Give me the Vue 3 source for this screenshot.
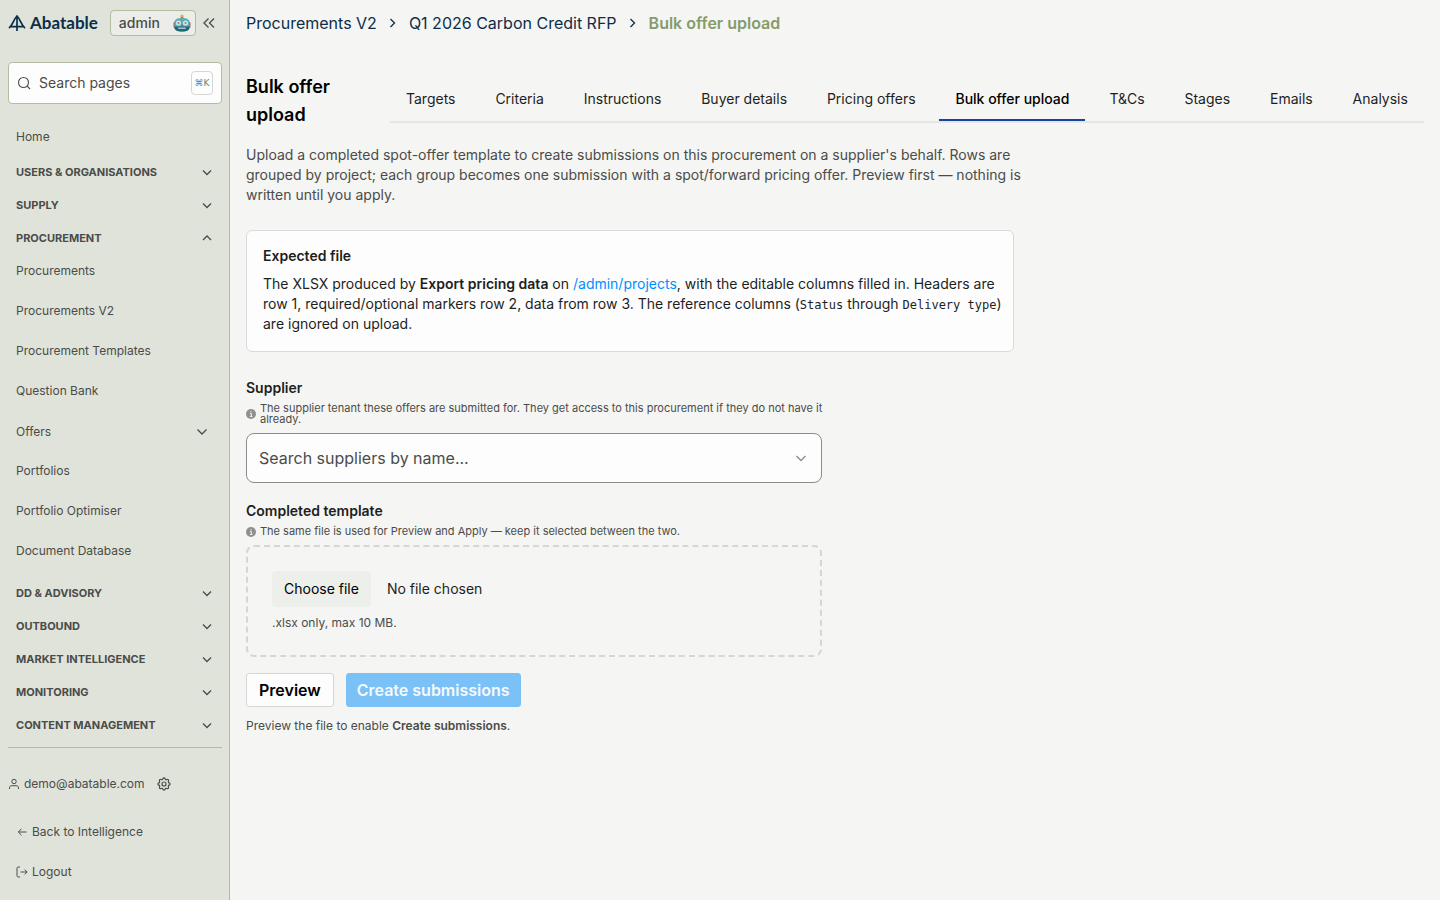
<script setup>
import { ref } from 'vue'

const search = ref('')
const supplier = ref('')
const fileName = ref('No file chosen')
const previewed = ref(false)

const chevronDown = 'M4 6.5l4 4 4-4'
const chevronUp = 'M4 10l4-4 4 4'

const groups = ref([
  { title: 'Users & organisations', open: false, items: [] },
  { title: 'Supply', open: false, items: [] },
  {
    title: 'Procurement',
    open: true,
    items: [
      { label: 'Procurements' },
      { label: 'Procurements V2' },
      { label: 'Procurement Templates' },
      { label: 'Question Bank' },
      { label: 'Offers', nested: true },
      { label: 'Portfolios' },
      { label: 'Portfolio Optimiser' },
      { label: 'Document Database' }
    ]
  },
  { title: 'DD & Advisory', open: false, items: [] },
  { title: 'Outbound', open: false, items: [] },
  { title: 'Market intelligence', open: false, items: [] },
  { title: 'Monitoring', open: false, items: [] },
  { title: 'Content management', open: false, items: [] }
])

const tabs = [
  'Targets',
  'Criteria',
  'Instructions',
  'Buyer details',
  'Pricing offers',
  'Bulk offer upload',
  'T&Cs',
  'Stages',
  'Emails',
  'Analysis'
]
const activeTab = ref('Bulk offer upload')

const onFileChange = function (event) {
  const file = event.target.files[0]
  fileName.value = file ? file.name : 'No file chosen'
}
</script>

<template>
  <div class="layout">
    <aside class="sidebar">
      <div class="brand-row">
        <a href="#" class="brand">
          <svg class="brand__mark" viewBox="0 0 18 18" aria-hidden="true">
            <path d="M9 1.500v15.500M1 14.200C5 11 5.500 5.500 9 2c3.500 3.500 4 9 8 12.200M2.500 12.600h13" />
          </svg>
          <span class="brand__name">Abatable</span>
        </a>
        <span class="role">
          admin
          <svg class="role__robot" viewBox="0 0 18 18" aria-hidden="true">
            <path d="M9 2.500v3" stroke="#6a5a9c" stroke-width="2.500" />
            <circle cx="9" cy="2" r="1.600" fill="#f2a63b" />
            <rect x="0.500" y="8" width="2" height="6" rx="1" fill="#b0605c" />
            <rect x="15.500" y="8" width="2" height="6" rx="1" fill="#b0605c" />
            <path d="M1.500 8C1.500 5.500 4.500 4 9 4s7.500 1.500 7.500 4v5.500c0 2.500-2.500 4-7.500 4s-7.500-1.500-7.500-4z" fill="#5fa9b5" />
            <path d="M1.500 12.500v1c0 2.500 2.500 4 7.500 4s7.500-1.500 7.500-4v-1z" fill="#226678" />
            <circle cx="5.500" cy="9" r="2.600" fill="#b5ecf2" />
            <circle cx="12.500" cy="9" r="2.600" fill="#b5ecf2" />
            <circle cx="5.500" cy="9" r="1" fill="#cf6a6a" />
            <circle cx="12.500" cy="9" r="1" fill="#cf6a6a" />
            <path d="M9 9.500l1.300 2.500H7.700z" fill="#d9534f" />
            <rect x="5" y="13.500" width="8" height="1.500" rx="0.700" fill="#9fc4cb" />
          </svg>
        </span>
        <button type="button" class="icon-button" aria-label="Collapse sidebar">
          <svg class="icon-16" viewBox="0 0 16 16" aria-hidden="true">
            <path d="M7.500 3.500L3 8l4.500 4.500M13 3.500L8.500 8l4.500 4.500" />
          </svg>
        </button>
      </div>

      <label class="search">
        <svg class="icon-16" viewBox="0 0 16 16" aria-hidden="true">
          <circle cx="7.500" cy="7.500" r="5" />
          <path d="M11.200 11.200l2.800 2.800" />
        </svg>
        <input v-model="search" type="text" placeholder="Search pages" aria-label="Search pages" />
        <kbd>⌘K</kbd>
      </label>

      <nav class="nav" aria-label="Admin">
        <a href="#" class="nav__home">Home</a>
        <section v-for="group in groups" :key="group.title">
          <button type="button" class="nav__group" :aria-expanded="group.open" @click="group.open = !group.open">
            {{ group.title }}
            <svg class="icon-16" viewBox="0 0 16 16" aria-hidden="true">
              <path :d="group.open ? chevronUp : chevronDown" />
            </svg>
          </button>
          <ul v-if="group.open && group.items.length" class="nav__items">
            <li v-for="item in group.items" :key="item.label">
              <button v-if="item.nested" type="button" class="nav__item nav__item--nested">
                {{ item.label }}
                <svg class="icon-16" viewBox="0 0 16 16" aria-hidden="true">
                  <path d="M3.500 5.500L8 10l4.500-4.500" />
                </svg>
              </button>
              <a v-else href="#" class="nav__item">{{ item.label }}</a>
            </li>
          </ul>
        </section>
      </nav>

      <div class="account">
        <div class="account__user">
          <svg class="icon-12" viewBox="0 0 12 12" aria-hidden="true">
            <circle cx="6" cy="3.500" r="2.200" />
            <path d="M1.500 11V9.800C1.500 8.500 2.500 7.700 3.700 7.700h4.600c1.200 0 2.200.8 2.200 2.100V11" />
          </svg>
          <span>demo@abatable.com</span>
          <button type="button" class="icon-button" aria-label="Settings">
            <svg class="icon-16" viewBox="0 0 24 24" aria-hidden="true">
              <g stroke-width="1.800">
                <circle cx="12" cy="12" r="3" />
                <path d="M10.300 4.300c.4-1.800 3-1.800 3.400 0a1.700 1.700 0 0 0 2.600 1.100c1.500-.9 3.300.8 2.400 2.400a1.700 1.700 0 0 0 1 2.500c1.800.4 1.800 3 0 3.400a1.700 1.700 0 0 0-1 2.600c.9 1.500-.9 3.300-2.400 2.400a1.700 1.700 0 0 0-2.600 1c-.4 1.800-3 1.800-3.400 0a1.700 1.700 0 0 0-2.600-1c-1.500.9-3.300-.9-2.400-2.400a1.700 1.700 0 0 0-1-2.600c-1.800-.4-1.800-3 0-3.400a1.700 1.700 0 0 0 1-2.500c-.9-1.600.9-3.300 2.400-2.400 1 .6 2.300 0 2.600-1.100z" />
              </g>
            </svg>
          </button>
        </div>
        <a href="#" class="account__link">
          <svg class="icon-12" viewBox="0 0 12 12" aria-hidden="true">
            <path d="M10.500 6h-8M5.500 2.800L2.300 6l3.200 3.200" />
          </svg>
          Back to Intelligence
        </a>
        <a href="#" class="account__link">
          <svg class="icon-12" viewBox="0 0 12 12" aria-hidden="true">
            <path d="M4 1H2.200C1.500 1 1 1.500 1 2.200v7.600c0 .7.500 1.200 1.200 1.200H4M4.500 6h6.500M8.800 3.600L11.200 6 8.800 8.400" />
          </svg>
          Logout
        </a>
      </div>
    </aside>

    <main class="main">
      <nav class="breadcrumbs" aria-label="Breadcrumb">
        <a href="#">Procurements V2</a>
        <svg class="icon-16" viewBox="0 0 16 16" aria-hidden="true">
          <path d="M5.500 4l4 4-4 4" />
        </svg>
        <a href="#">Q1 2026 Carbon Credit RFP</a>
        <svg class="icon-16" viewBox="0 0 16 16" aria-hidden="true">
          <path d="M5.500 4l4 4-4 4" />
        </svg>
        <span class="breadcrumbs__current" aria-current="page">Bulk offer upload</span>
      </nav>

      <header class="page-header">
        <h1>Bulk offer upload</h1>
        <div class="tabs" role="tablist">
          <button
            v-for="tab in tabs"
            :key="tab"
            type="button"
            role="tab"
            class="tab"
            :class="{ 'tab--active': tab === activeTab }"
            :aria-selected="tab === activeTab"
            @click="activeTab = tab"
          >
            {{ tab }}
          </button>
        </div>
      </header>

      <p class="intro">
        Upload a completed spot-offer template to create submissions on this procurement on a supplier's behalf. Rows are
        grouped by project; each group becomes one submission with a spot/forward pricing offer. Preview first — nothing is
        written until you apply.
      </p>

      <section class="card">
        <h2>Expected file</h2>
        <p>
          The XLSX produced by <strong>Export pricing data</strong> on <a href="#">/admin/projects</a>, with the editable
          columns filled in. Headers are row 1, required/optional markers row 2, data from row 3. The reference columns
          (<code>Status</code> through <code>Delivery type</code>) are ignored on upload.
        </p>
      </section>

      <form class="form" @submit.prevent>
        <div class="field">
          <label for="supplier" class="field__label">Supplier</label>
          <p class="field__hint">
            <svg class="info" viewBox="0 0 10 10" aria-hidden="true">
              <circle cx="5" cy="5" r="5" />
              <path d="M4 4.500h1.300v2.800M3.900 7.400h2.500M5 2.100v1.200" />
            </svg>
            <span>The supplier tenant these offers are submitted for. They get access to this procurement if they do not have it already.</span>
          </p>
          <div class="combobox">
            <input id="supplier" v-model="supplier" type="text" role="combobox" aria-expanded="false" placeholder="Search suppliers by name..." />
            <svg class="icon-16" viewBox="0 0 16 16" aria-hidden="true">
              <path d="M3.500 6L8 10.500 12.500 6" />
            </svg>
          </div>
        </div>

        <div class="field">
          <span class="field__label">Completed template</span>
          <p class="field__hint">
            <svg class="info" viewBox="0 0 10 10" aria-hidden="true">
              <circle cx="5" cy="5" r="5" />
              <path d="M4 4.500h1.300v2.800M3.900 7.400h2.500M5 2.100v1.200" />
            </svg>
            <span>The same file is used for Preview and Apply — keep it selected between the two.</span>
          </p>
          <div class="dropzone">
            <div class="dropzone__row">
              <input id="template" class="dropzone__input" type="file" accept=".xlsx" @change="onFileChange" />
              <label for="template" class="dropzone__button">Choose file</label>
              <span>{{ fileName }}</span>
            </div>
            <p class="dropzone__note">.xlsx only, max 10 MB.</p>
          </div>
        </div>

        <div class="actions">
          <button type="button" class="button" @click="previewed = true">Preview</button>
          <button type="submit" class="button button--primary" :disabled="!previewed">Create submissions</button>
        </div>
        <p class="form__note">Preview the file to enable <strong>Create submissions</strong>.</p>
      </form>
    </main>
  </div>
</template>

<style>
body {
  background: #f5f5f3;
}
</style>

<style scoped>
.layout {
  display: grid;
  grid-template-columns: 230px 1fr;
  min-height: 100vh;
  font-family: Inter, "Liberation Sans", sans-serif;
  font-size: 14px;
  line-height: 20px;
  color: #1d1f1e;
}

.layout *,
.layout {
  box-sizing: border-box;
}

h1,
h2,
p,
ul {
  margin: 0;
  padding: 0;
}

a {
  color: inherit;
  text-decoration: none;
}

button,
input {
  font: inherit;
  color: inherit;
}

button {
  padding: 0;
  border: 0;
  background: none;
  cursor: pointer;
}

strong {
  font-weight: 600;
}

svg {
  flex: none;
  fill: none;
  stroke: currentColor;
  stroke-width: 1.3;
}

.icon-16 {
  width: 16px;
  height: 16px;
}

.icon-12 {
  width: 12px;
  height: 12px;
  stroke-width: 1;
}

.icon-button {
  display: flex;
}

.sidebar {
  display: flex;
  flex-direction: column;
  padding: 8px 7px 8px 8px;
  background: #e0e3d9;
  border-right: 1px solid #b3bba0;
  color: #4a4c4a;
}

.brand-row {
  display: flex;
  align-items: center;
  height: 30px;
}

.brand {
  display: flex;
  align-items: center;
  gap: 4px;
  margin-right: 12px;
  color: #0b2e4a;
}

.brand__mark {
  width: 18px;
  height: 18px;
  stroke-width: 1.7;
}

.brand__name {
  font-family: Lato, sans-serif;
  font-size: 17px;
  font-weight: 700;
}

.role {
  display: flex;
  align-items: center;
  justify-content: space-between;
  width: 86px;
  height: 26px;
  margin-right: 5px;
  padding: 0 4px 0 8px;
  border: 1px solid #b3bba0;
  border-radius: 4px;
  background: #ecede8;
  font-weight: 500;
}

.role__robot {
  width: 18px;
  height: 18px;
  stroke: none;
}

.search {
  display: flex;
  align-items: center;
  gap: 7px;
  height: 42px;
  margin-top: 24px;
  padding: 0 8px 0 7px;
  border: 1px solid #b3bba0;
  border-radius: 4px;
  background: #fdfdfd;
}

.search input {
  flex: 1;
  min-width: 0;
  padding: 0;
  border: 0;
  outline: 0;
  background: none;
}

input::placeholder {
  color: #4a4c4a;
  opacity: 1;
}

.search .icon-16 {
  stroke-width: 1.1;
}

kbd {
  width: 22px;
  height: 24px;
  border: 1px solid #d6d6d6;
  border-radius: 4px;
  font-family: "DejaVu Sans", sans-serif;
  font-size: 9px;
  line-height: 22px;
  text-align: center;
  color: #777977;
}

.nav {
  padding: 15px 7px 6px 8px;
  border-bottom: 1px solid #b3bba0;
  font-size: 12px;
}

.nav__home {
  display: flex;
  align-items: center;
  height: 36px;
}

.nav__group {
  display: flex;
  align-items: center;
  justify-content: space-between;
  width: 100%;
  height: 33px;
  font-size: 11px;
  font-weight: 700;
  text-transform: uppercase;
}

.nav__items {
  display: flex;
  flex-direction: column;
  gap: 8px;
  padding: 1px 0 9px;
  list-style: none;
}

.nav__item {
  display: flex;
  align-items: center;
  justify-content: space-between;
  width: 100%;
  height: 32px;
}

.nav__item--nested {
  padding: 2px 5px 0 0;
}

.account {
  display: flex;
  flex-direction: column;
  padding-top: 16px;
  font-size: 12px;
}

.account__user {
  display: flex;
  align-items: center;
  gap: 4px;
  height: 40px;
  margin-bottom: 8px;
}

.account__user .icon-button {
  margin-left: 7px;
}

.account__link {
  display: flex;
  align-items: center;
  gap: 4px;
  height: 40px;
  padding-left: 8px;
}

.main {
  min-width: 0;
  padding: 8px 16px;
}

.breadcrumbs {
  display: flex;
  align-items: center;
  gap: 8px;
  height: 30px;
  font-size: 16px;
  color: #0b2e4a;
}

.breadcrumbs__current {
  font-weight: 600;
  color: #869b6b;
}

.page-header {
  display: flex;
  align-items: center;
  gap: 16px;
  margin-top: 35px;
}

h1 {
  width: 128px;
  font-size: 18px;
  font-weight: 600;
  line-height: 28px;
  color: #000;
}

.tabs {
  display: flex;
  flex: 1;
  justify-content: space-between;
  border-bottom: 2px solid #e6e6e4;
}

.tab {
  height: 41px;
  padding: 0 16px;
  border-bottom: 2px solid transparent;
  white-space: nowrap;
}

.tab--active {
  border-bottom-color: #1a43a0;
  font-weight: 500;
  color: #000;
}

.intro {
  max-width: 776px;
  margin-top: 16px;
  color: #4a4c4a;
}

.card {
  max-width: 768px;
  margin-top: 25px;
  padding: 15px 8px 17px 16px;
  border: 1px solid #d9dad9;
  border-radius: 6px;
  background: #fdfdfd;
}

.card h2 {
  margin-bottom: 8px;
  font-size: 14px;
  font-weight: 600;
}

.card a {
  color: #0090ff;
}

code {
  font-family: "DejaVu Sans Mono", monospace;
  font-size: 12px;
  line-height: 16px;
}

.form {
  max-width: 592px;
  margin-top: 26px;
}

.field + .field {
  margin-top: 18px;
}

.field__label {
  display: block;
  font-weight: 600;
}

.field__hint {
  display: flex;
  align-items: center;
  gap: 4px;
  margin: 5px 0 8px;
  font-size: 11px;
  line-height: 11px;
  color: #4a4c4a;
}

.info {
  width: 10px;
  height: 10px;
}

.info circle {
  fill: #8f918f;
  stroke: none;
}

.info path {
  stroke: #f5f5f3;
  stroke-width: 1;
}

.combobox {
  display: flex;
  align-items: center;
  max-width: 576px;
  height: 50px;
  padding: 0 12px;
  border: 1px solid #8b8d8b;
  border-radius: 8px;
  background: #fdfdfd;
  font-size: 16px;
}

.combobox input {
  flex: 1;
  min-width: 0;
  padding: 0;
  border: 0;
  outline: 0;
  background: none;
}

.combobox .icon-16 {
  color: #8b8d8b;
}

.dropzone {
  max-width: 576px;
  padding: 24px;
  border: 2px dashed #d6d7d5;
  border-radius: 8px;
}

.dropzone__row {
  display: flex;
  align-items: center;
  gap: 16px;
}

/* kept focusable, the label below acts as the visible button */
.dropzone__input {
  position: absolute;
  width: 1px;
  height: 1px;
  opacity: 0;
}

.dropzone__button {
  padding: 8px 12px;
  border-radius: 4px;
  background: #edefea;
  color: #000;
  cursor: pointer;
}

.dropzone__note {
  margin-top: 8px;
  font-size: 12px;
  line-height: 16px;
  color: #4a4c4a;
}

.actions {
  display: flex;
  gap: 12px;
  margin-top: 16px;
}

.button {
  height: 34px;
  padding: 0 12px;
  border: 1px solid #d6d7d5;
  border-radius: 3px;
  background: #fdfdfd;
  font-size: 16px;
  font-weight: 600;
  color: #000;
}

.button--primary {
  padding: 0 10px;
  border-color: #0090ff;
  background: #0090ff;
  color: #fff;
}

.button--primary:disabled {
  border-color: #7ac1f8;
  background: #7ac1f8;
  color: #f5f9fc;
}

.form__note {
  margin-top: 9px;
  font-size: 12px;
  color: #4a4c4a;
}
</style>
